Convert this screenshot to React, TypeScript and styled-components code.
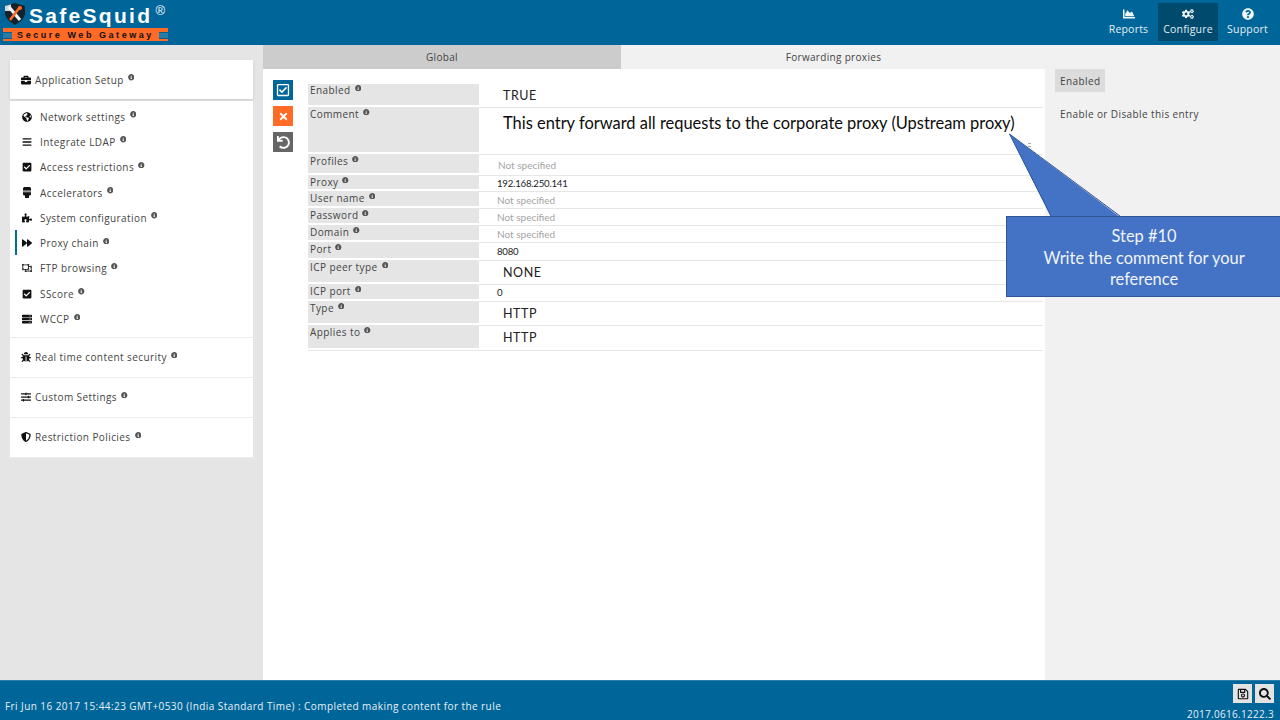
import React from 'react';
import styled, { createGlobalStyle } from 'styled-components';
import {
  FaBriefcase, FaGlobeAmericas, FaBars, FaCheckSquare, FaPuzzlePiece, FaForward,
  FaRegObjectUngroup, FaServer, FaBug, FaSlidersH, FaShieldAlt, FaInfoCircle, FaChartArea, FaCogs,
  FaQuestionCircle, FaRegSave, FaSearch, FaRegCheckSquare, FaTimes, FaUndo,
} from 'react-icons/fa';

const UI = `"Open Sans", "Noto Sans", "DejaVu Sans", sans-serif`;

const Global = createGlobalStyle`
  html, body { margin: 0; padding: 0; height: 100%; }
  body { font-family: ${UI}; overflow: hidden; background: #fff; }
  #root { height: 100%; }
  * { box-sizing: border-box; }
`;

const Page = styled.div`
  position: relative; width: 1280px; height: 720px; display: flex; flex-direction: column; overflow: hidden;
`;
const Header = styled.header`
  height: 45px; background: #006699; display: flex; justify-content: space-between; flex: none;
`;
const Logo = styled.div`
  width: 170px; padding: 3px 0 0 3px; display: flex; flex-direction: column;
`;
const LogoTop = styled.div`
  display: flex; align-items: flex-start; height: 25px; padding-left: 1px;
`;
const LogoName = styled.span`
  color: #fff; font-family: "Liberation Sans", sans-serif; font-size: 21px; font-weight: 700; letter-spacing: 2.3px; line-height: 26px; margin-left: 3px;
`;
const LogoReg = styled.sup`
  font-size: 13px; line-height: 13px; font-weight: 400; vertical-align: 8px; letter-spacing: 0; margin-left: 3px;
`;
const LogoBanner = styled.div`
  height: 13px; width: 165px; background: #ff6a26; display: flex; align-items: center; justify-content: center; position: relative;
  color: #111; font-family: "Liberation Sans", sans-serif; font-weight: 700; font-size: 9px; letter-spacing: 2.55px; white-space: nowrap;
  &::before, &::after { content: ""; position: absolute; top: 4px; height: 5px; width: 9px; background: #2a7aa6; border-top: 1px solid #0a5f8c; border-bottom: 1px solid #0a5f8c; }
  &::before { left: 0; }
  &::after { right: 0; }
`;
const Nav = styled.nav`
  display: flex; padding: 3px 3px 4px 0;
`;
const NavItem = styled.div<{ $active?: boolean; $w: number }>`
  width: ${p => p.$w}px; background: ${p => (p.$active ? '#004a6e' : 'transparent')}; color: #e4eef4;
  display: flex; flex-direction: column; align-items: center; padding-top: 5px; font-size: 10.5px; letter-spacing: .2px; line-height: 14px; gap: 2px;
  svg { font-size: 12px; color: #f2f7fa; }
`;
const Body = styled.div`
  flex: 1; display: flex; min-height: 0;
`;
const Sidebar = styled.aside`
  width: 263px; flex: none; background: #e5e5e5; padding: 15px 10px 0; display: flex; flex-direction: column;
`;
const LeadCard = styled.div`
  height: 39px; background: #fff; display: flex; align-items: center; padding-left: 11px; flex: none;
  box-shadow: 0 1px 3px rgba(0,0,0,.12); margin-bottom: 2px;
`;
const Card = styled.div`
  height: 40px; background: #fff; display: flex; align-items: center; padding-left: 11px; flex: none;
  border-bottom: 1px solid #ececec;
`;
const SubList = styled.div`
  background: #fff; padding: 3px 0 5px; display: flex; flex-direction: column; border-bottom: 1px solid #ececec;
`;
const SubItem = styled.div<{ $active?: boolean }>`
  height: 25.3px; display: flex; align-items: center; position: relative; padding-left: 12px;
  ${p => p.$active ? `&::before { content: ""; position: absolute; left: 5px; top: 0; width: 2px; height: 25px; background: #006f94; }` : ''}
`;
const NavIcon = styled.span`
  width: 10px; flex: none; display: flex; justify-content: center; color: #111; font-size: 10px;
`;
const ItemLabel = styled.span<{ $gap: number }>`
  margin-left: ${p => p.$gap}px; font-size: 10px; letter-spacing: .42px; color: #444; white-space: nowrap;
`;
const Info = styled(FaInfoCircle)`
  font-size: 6.5px; color: #555; vertical-align: baseline; position: relative; top: -3px; margin-left: 4px;
`;
const Content = styled.main`
  flex: 1; display: flex; flex-direction: column; min-width: 0;
`;
const Tabs = styled.div`
  height: 24px; display: flex; flex: none; background: #f1f1f1;
`;
const Tab = styled.div<{ $active?: boolean; $w: number }>`
  width: ${p => p.$w}px; display: flex; align-items: center; justify-content: center; font-size: 10px; letter-spacing: .32px; color: #444;
  background: ${p => (p.$active ? '#cccccc' : '#f1f1f1')};
`;
const Panels = styled.div`
  flex: 1; display: flex; min-height: 0;
`;
const Main = styled.section`
  width: 782px; background: #fff; display: flex; padding: 11px 0 0 10px;
`;
const Actions = styled.div`
  width: 35px; flex: none; display: flex; flex-direction: column; gap: 6px;
`;
const ActionButton = styled.div<{ $bg: string; $size: number }>`
  width: 20px; height: 20px; background: ${p => p.$bg}; color: #fff; display: flex; align-items: center; justify-content: center; font-size: ${p => p.$size}px;
`;
const Form = styled.div`
  width: 735px; padding-top: 4px; display: flex; flex-direction: column;
`;
const Row = styled.div<{ $h: number }>`
  height: ${p => p.$h}px; display: grid; grid-template-columns: 171px 1fr; padding-bottom: 2px; position: relative;
  &::after { content: ""; position: absolute; left: 0; right: 0; bottom: 0; height: 1px; background: #e6e6e6; }
`;
const RowLabel = styled.div`
  background: #e5e5e5; padding-left: 2px; margin-bottom: 1px; font-size: 10px; letter-spacing: .42px; color: #444; line-height: 12px; white-space: nowrap;
`;
const sizes = { comment: '16.45px', big: '12.5px', plain: '9.6px', muted: '10px' };
const spacing = { comment: '0', big: '.55px', plain: '-.2px', muted: '0' };
const RowValue = styled.div<{ $x: number; $kind: 'big' | 'plain' | 'muted' | 'comment' }>`
  padding-left: ${p => p.$x}px; font-family: "Lato", ${UI};
  font-size: ${p => sizes[p.$kind]};
  letter-spacing: ${p => spacing[p.$kind]};
  color: ${p => (p.$kind === 'muted' ? '#a4a4a4' : p.$kind === 'comment' ? '#0c0c0c' : '#222')};
  display: flex; align-items: ${p => (p.$kind === 'comment' ? 'flex-start' : 'center')};
  ${p => (p.$kind === 'comment' ? 'padding-top: 5px; line-height: 20px;' : '')}
  white-space: nowrap;
`;
const Grip = styled.span`
  position: absolute; right: 13px; top: 35px; width: 2px; height: 4px; border-top: 1px dotted #aaa; border-bottom: 1px dotted #aaa;
`;
const Help = styled.aside`
  flex: 1; background: #f1f1f1; padding: 0 10px 0 10px; font-size: 10px; letter-spacing: .4px; color: #444;
`;
const HelpTitle = styled.div`
  display: inline-flex; align-items: center; height: 23px; padding: 0 5px; background: #dcdcdc; font-size: 10px;
`;
const HelpText = styled.div`
  padding: 15px 0 0 5px; line-height: 14px;
`;
const Footer = styled.footer`
  height: 40px; background: #006699; flex: none; position: relative; border-top: 1px solid #2b7ea8; color: #e8f0f5;
  display: flex; justify-content: space-between; align-items: flex-end;
`;
const Status = styled.div`
  padding: 0 0 7px 5px; font-size: 10px; letter-spacing: .43px; line-height: 14px; white-space: nowrap;
`;
const FooterRight = styled.div`
  display: flex; flex-direction: column; align-items: flex-end; padding-right: 6px; gap: 5px;
`;
const Tools = styled.div`
  display: flex; gap: 3px;
`;
const ToolButton = styled.div`
  width: 19px; height: 19px; background: #e3e3e3; display: flex; align-items: center; justify-content: center; color: #111; font-size: 12px;
`;
const Version = styled.div`
  font-size: 10px; letter-spacing: .3px; line-height: 12px; height: 12px; white-space: nowrap;
`;
const Callout = styled.div`
  position: absolute; left: 1006px; top: 216px; width: 290px; height: 81px; background: #4472c4; border: 1px solid #2f5597;
  color: #f0f4fb; font-family: "Lato", ${UI}; font-size: 16.4px; line-height: 21.5px; text-align: center; padding: 8px 0 0;
`;
const CalloutLine = styled.div`
  width: 274px;
`;
const Tail = styled.svg`
  position: absolute; left: 1000px; top: 130px; width: 140px; height: 90px; overflow: visible;
`;

const GasMask = () => (
  <svg width="10" height="11" viewBox="0 0 10 11">
    <path d="M1 1.5 Q1 0 2.5 0 H7.5 Q9 0 9 1.5 V7 Q9 8.5 7.5 8.5 H7 V11 H3 V8.5 H2.5 Q1 8.5 1 7 Z" fill="#111" />
    <rect x="0" y="3.6" width="10" height="1.6" fill="#fff" />
    <rect x="1" y="4" width="8" height="0.6" fill="#555" />
  </svg>
);

const subs = [
  { icon: <FaGlobeAmericas />, label: 'Network settings' },
  { icon: <FaBars />, label: 'Integrate LDAP' },
  { icon: <FaCheckSquare />, label: 'Access restrictions' },
  { icon: <GasMask />, label: 'Accelerators' },
  { icon: <FaPuzzlePiece />, label: 'System configuration' },
  { icon: <FaForward />, label: 'Proxy chain', active: true },
  { icon: <FaRegObjectUngroup />, label: 'FTP browsing' },
  { icon: <FaCheckSquare />, label: 'SScore' },
  { icon: <FaServer />, label: 'WCCP' },
];

type Kind = 'big' | 'plain' | 'muted' | 'comment';
const rows: { label: string; value: string; h: number; x: number; kind: Kind }[] = [
  { label: 'Enabled', value: 'TRUE', h: 24, x: 24, kind: 'big' },
  { label: 'Comment', value: 'This entry forward all requests to the corporate proxy (Upstream proxy)', h: 47, x: 24, kind: 'comment' },
  { label: 'Profiles', value: 'Not specified', h: 21, x: 19, kind: 'muted' },
  { label: 'Proxy', value: '192.168.250.141', h: 16, x: 18, kind: 'plain' },
  { label: 'User name', value: 'Not specified', h: 17, x: 18, kind: 'muted' },
  { label: 'Password', value: 'Not specified', h: 17, x: 18, kind: 'muted' },
  { label: 'Domain', value: 'Not specified', h: 17, x: 18, kind: 'muted' },
  { label: 'Port', value: '8080', h: 18, x: 18, kind: 'plain' },
  { label: 'ICP peer type', value: 'NONE', h: 24, x: 24, kind: 'big' },
  { label: 'ICP port', value: '0', h: 17, x: 18, kind: 'plain' },
  { label: 'Type', value: 'HTTP', h: 24, x: 24, kind: 'big' },
  { label: 'Applies to', value: 'HTTP', h: 25, x: 24, kind: 'big' },
];

export default function App() {
  return (
    <Page>
      <Global />
      <Header>
        <Logo>
          <LogoTop>
            <svg width="22" height="22" viewBox="0 0 22 22">
              <path d="M1 3 L11 0 L21 3 L21 11 Q20 17 11 22 Q2 17 1 11 Z" fill="#15222b" />
              <path d="M1 3 L7 1.2 L7 8 L1 8 Z" fill="#cfd8de" />
              <path d="M5 4 L16 17" stroke="#f4f4f4" strokeWidth="3.2" />
              <path d="M16 4 L6 17" stroke="#ff6a26" strokeWidth="2.6" />
              <circle cx="16" cy="5" r="2" fill="#ff6a26" />
            </svg>
            <LogoName>SafeSquid<LogoReg>®</LogoReg></LogoName>
          </LogoTop>
          <LogoBanner>Secure Web Gateway</LogoBanner>
        </Logo>
        <Nav>
          <NavItem $w={59}><FaChartArea />Reports</NavItem>
          <NavItem $w={60} $active><FaCogs />Configure</NavItem>
          <NavItem $w={59}><FaQuestionCircle />Support</NavItem>
        </Nav>
      </Header>
      <Body>
        <Sidebar>
          <LeadCard>
            <NavIcon><FaBriefcase /></NavIcon>
            <ItemLabel $gap={4}>Application Setup<Info /></ItemLabel>
          </LeadCard>
          <SubList>
            {subs.map(s => (
              <SubItem key={s.label} $active={s.active}>
                <NavIcon>{s.icon}</NavIcon>
                <ItemLabel $gap={8}>{s.label}<Info /></ItemLabel>
              </SubItem>
            ))}
          </SubList>
          <Card>
            <NavIcon><FaBug /></NavIcon>
            <ItemLabel $gap={4}>Real time content security<Info /></ItemLabel>
          </Card>
          <Card>
            <NavIcon><FaSlidersH /></NavIcon>
            <ItemLabel $gap={4}>Custom Settings<Info /></ItemLabel>
          </Card>
          <Card>
            <NavIcon><FaShieldAlt /></NavIcon>
            <ItemLabel $gap={4}>Restriction Policies<Info /></ItemLabel>
          </Card>
        </Sidebar>
        <Content>
          <Tabs>
            <Tab $w={358} $active>Global</Tab>
            <Tab $w={425}>Forwarding proxies</Tab>
          </Tabs>
          <Panels>
            <Main>
              <Actions>
                <ActionButton $bg="#006699" $size={14}><FaRegCheckSquare /></ActionButton>
                <ActionButton $bg="#ff6a26" $size={11}><FaTimes /></ActionButton>
                <ActionButton $bg="#666666" $size={13}><FaUndo /></ActionButton>
              </Actions>
              <Form>
                {rows.map(r => (
                  <Row key={r.label} $h={r.h}>
                    <RowLabel>{r.label}<Info /></RowLabel>
                    <RowValue $x={r.x} $kind={r.kind}>{r.value}</RowValue>
                    {r.kind === 'comment' && <Grip />}
                  </Row>
                ))}
              </Form>
            </Main>
            <Help>
              <HelpTitle>Enabled</HelpTitle>
              <HelpText>Enable or Disable this entry</HelpText>
            </Help>
          </Panels>
        </Content>
      </Body>
      <Footer>
        <Status>Fri Jun 16 2017 15:44:23 GMT+0530 (India Standard Time) : Completed making content for the rule</Status>
        <FooterRight>
          <Tools>
            <ToolButton><FaRegSave /></ToolButton>
            <ToolButton><FaSearch /></ToolButton>
          </Tools>
          <Version>2017.0616.1222.3</Version>
        </FooterRight>
      </Footer>
      <Tail viewBox="0 0 140 90">
        <path d="M9.5 4 L51 87 L120 87 Z" fill="#4472c4" />
        <path d="M51 86 L9.5 4 L120 86" fill="none" stroke="#2f5597" strokeWidth="1" />
      </Tail>
      <Callout>
        <CalloutLine>Step #10</CalloutLine>
        <CalloutLine>Write the comment for your<br />reference</CalloutLine>
      </Callout>
    </Page>
  );
}
